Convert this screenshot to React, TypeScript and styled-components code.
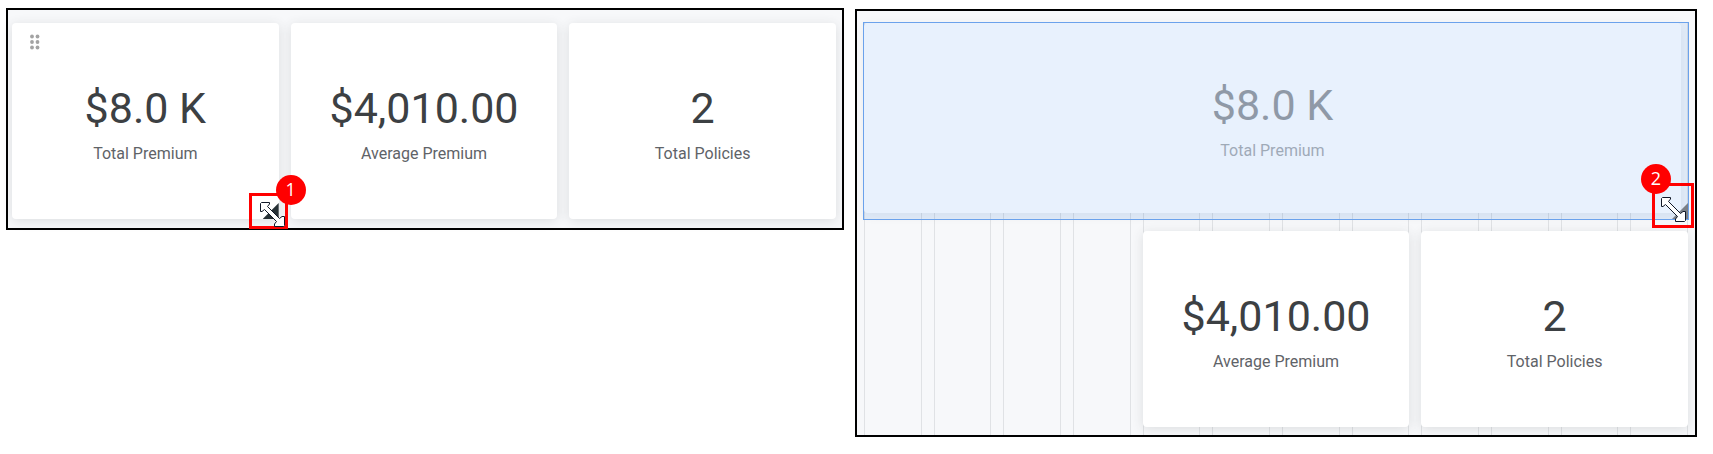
import React from "react";
import styled, { createGlobalStyle } from "styled-components";

const GlobalStyle = createGlobalStyle`
  *, *::before, *::after { box-sizing: border-box; }
  body { margin: 0; background: #fff; font-family: Roboto, "Liberation Sans", sans-serif; }
  h2, p { margin: 0; font-weight: 400; }
`;

const Page = styled.main`
  display: grid;
  grid-template-columns: 838fr 842fr;
  align-items: start;
  gap: 11px;
  padding: 8px 16px 16px 6px;
`;

const Panel = styled.section<{ $left: number; $right: number; $top: number }>`
  position: relative;
  margin-top: ${(p) => p.$top}px;
  border: 2px solid #000;
  background: #f7f8fa;
  padding: ${(p) => 13 - p.$top}px ${(p) => p.$right}px ${(p) => 9 - p.$top}px ${(p) => p.$left}px;
`;

const CardGrid = styled.div`
  position: relative;
  display: grid;
  grid-template-columns: repeat(3, 1fr);
  grid-auto-rows: 196px;
  gap: 12px;
`;

const Guides = styled.div`
  position: absolute;
  inset: 0 0 -8px 0;
  display: grid;
  grid-template-columns: repeat(12, 1fr);
  column-gap: 12px;
`;

const Guide = styled.span`
  border: solid #e0e2e5;
  border-width: 0 1px;
`;

const Card = styled.article<{ $column?: number }>`
  position: relative;
  ${(p) => (p.$column ? `grid-column: ${p.$column};` : "")}
  display: flex;
  flex-direction: column;
  align-items: center;
  justify-content: center;
  gap: 8px;
  padding-top: 2px;
  border-radius: 4px;
  background: #fff;
  box-shadow: 0 2px 12px rgba(60, 64, 67, 0.14);
`;

const Value = styled.p`
  font-size: 43px;
  line-height: 56px;
  color: #3c4043;
`;

const Label = styled.h2`
  font-size: 16px;
  line-height: 20px;
  color: #5f6368;
`;

const Slot = styled.div`
  position: relative;
  grid-column: 1 / -1;
  display: grid;
  padding: 0 7px 6px 0;
`;

const Selection = styled.div`
  position: absolute;
  inset: -1px;
  border: 1px solid #6ba2ec;
  background: rgba(26, 115, 232, 0.1);
`;

const GhostCard = styled(Card)`
  box-shadow: 0 2px 12px rgba(60, 64, 67, 0.07);
  ${Value}, ${Label} { opacity: 0.5; }
`;

const DragButton = styled.button`
  position: absolute;
  top: 11px;
  left: 18px;
  display: grid;
  padding: 0;
  border: 0;
  background: none;
`;

const ResizeButton = styled.button<{ $color: string }>`
  position: absolute;
  right: 0;
  bottom: 0;
  width: 16px;
  height: 16px;
  padding: 0;
  border: 0;
  background: ${(p) => p.$color};
  clip-path: polygon(100% 0, 100% 100%, 0 100%);
`;

const Callout = styled.div<{ $width: number; $height: number; $right: number; $bottom: number }>`
  position: absolute;
  z-index: 2;
  right: ${(p) => p.$right}px;
  bottom: ${(p) => p.$bottom}px;
  width: ${(p) => p.$width}px;
  height: ${(p) => p.$height}px;
  border: 3px solid #f00;
`;

const Badge = styled.span<{ $left: number; $top: number }>`
  position: absolute;
  left: ${(p) => p.$left}px;
  top: ${(p) => p.$top}px;
  width: 30px;
  height: 30px;
  border-radius: 50%;
  background: #f00;
  color: #fff;
  font: 18px/28px "Open Sans", sans-serif;
  text-align: center;
`;

const Pointer = styled.svg<{ $left: number; $top: number }>`
  position: absolute;
  left: ${(p) => p.$left}px;
  top: ${(p) => p.$top}px;
`;

function ResizePointer({ left, top }: { left: number; top: number }) {
  return (
    <Pointer $left={left} $top={top} width="26" height="26" viewBox="0 0 26 26" aria-hidden="true">
      <path
        d="M.5 1.500 1.500.5H9.500V2L7.500 4.500 19.500 16.500 22 14.500H24.500V23.500L23.500 24.500H14.500V22L16.500 19.500 4.500 7.500 2 9.500H.5z"
        fill="#fff"
        stroke="#111827"
        strokeLinejoin="round"
      />
    </Pointer>
  );
}

function Metric({ value, label }: { value: string; label: string }) {
  return (
    <>
      <Value>{value}</Value>
      <Label>{label}</Label>
    </>
  );
}

export default function App() {
  return (
    <>
      <GlobalStyle />
      <Page>
        <Panel $left={4} $right={6} $top={0}>
          <CardGrid>
            <Card>
              <DragButton aria-label="Move tile">
                <svg width="10" height="16" viewBox="0 0 10 16" fill="#a3a3a3">
                  {[2.5, 8, 13.5].map((y) => (
                    <g key={y}>
                      <circle cx="2" cy={y} r="1.9" />
                      <circle cx="7.5" cy={y} r="1.9" />
                    </g>
                  ))}
                </svg>
              </DragButton>
              <Metric value="$8.0 K" label="Total Premium" />
              <ResizeButton $color="#263035" aria-label="Resize tile" />
              <Callout $width={39} $height={36} $right={-9} $bottom={-10}>
                <ResizePointer left={8} top={6} />
                <Badge $left={24} $top={-21}>1</Badge>
              </Callout>
            </Card>
            <Card>
              <Metric value="$4,010.00" label="Average Premium" />
            </Card>
            <Card>
              <Metric value="2" label="Total Policies" />
            </Card>
          </CardGrid>
        </Panel>

        <Panel $left={7} $right={7} $top={1}>
          <CardGrid>
            <Guides aria-hidden="true">
              {Array.from({ length: 12 }, (_, i) => (
                <Guide key={i} />
              ))}
            </Guides>
            <Slot>
              <GhostCard>
                <Metric value="$8.0 K" label="Total Premium" />
              </GhostCard>
              <Selection />
              <ResizeButton $color="#7b8087" aria-label="Resize tile" />
              <Callout $width={42} $height={45} $right={-6} $bottom={-9}>
                <ResizePointer left={6} top={11} />
                <Badge $left={-14} $top={-22}>2</Badge>
              </Callout>
            </Slot>
            <Card $column={2}>
              <Metric value="$4,010.00" label="Average Premium" />
            </Card>
            <Card $column={3}>
              <Metric value="2" label="Total Policies" />
            </Card>
          </CardGrid>
        </Panel>
      </Page>
    </>
  );
}
